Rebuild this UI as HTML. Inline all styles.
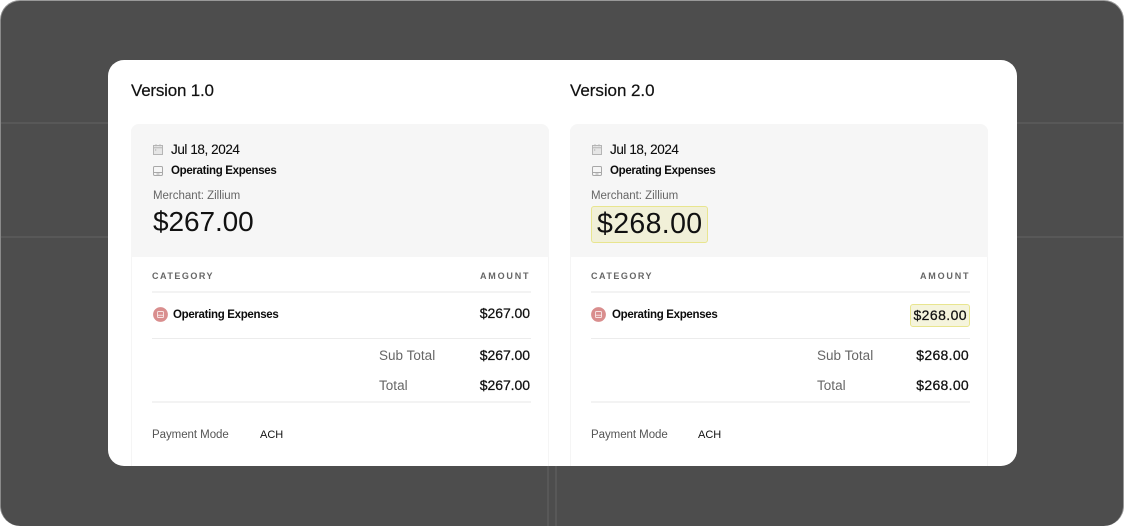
<!DOCTYPE html>
<html><head><meta charset="utf-8">
<style>
*{box-sizing:border-box}
html,body{margin:0;padding:0;width:1124px;height:526px;overflow:hidden;background:#fff}
body{position:relative;font-family:"Liberation Sans",sans-serif;color:#0c0c0c}
.a{position:absolute}
.t{position:absolute;white-space:nowrap;line-height:20px;height:20px}
.bg{left:0;top:0;width:1124px;height:526px;background:#4d4d4d;border-radius:20px;border:1px solid #999;border-bottom:0;border-left-color:#8a8a8a}
.ln{background:#585858}
.modal{left:108px;top:60px;width:909px;height:406px;background:#fff;border-radius:16px;overflow:hidden}
.h{font-size:17px;letter-spacing:-.21px;color:#111;-webkit-text-stroke:.2px #111}
.card{top:64px;width:418px;height:360px;background:#fff;border:1px solid #f5f5f5;border-radius:8px 8px 0 0;border-top:0}
.head{top:64px;width:418px;height:133px;background:#f6f6f6;border-radius:8px 8px 0 0}
.date{font-size:13.5px;letter-spacing:-.42px;-webkit-text-stroke:.1px #0c0c0c}
.b{font-size:11.5px;font-weight:bold;letter-spacing:-.32px}
.m{font-size:11.5px;color:#666;letter-spacing:-.02px}
.big{font-size:28px;letter-spacing:-.08px;line-height:32px;height:32px;color:#111}
.lab{font-size:9px;font-weight:bold;color:#666;letter-spacing:1.5px}
.lab.r{letter-spacing:1.8px}
.hr{height:1px;background:#ececec;width:379px}
.hr2{height:2px;background:#f3f3f3;width:379px}
.amt{font-size:14px;letter-spacing:-.05px;color:#111;text-align:right;width:70px;-webkit-text-stroke:.25px #111}
.gr{font-size:13.5px;color:#666;letter-spacing:.02px}
.pm{font-size:11.5px;color:#555;letter-spacing:-.05px}
.ach{font-size:11px;color:#111}
.hl{background:#f1f0d8;border:1px solid #e8e58f;border-radius:3px}
svg{position:absolute;display:block}
</style></head>
<body>
<div class="a bg"></div>
<div class="a ln" style="left:1px;top:122px;width:1122px;height:2px"></div>
<div class="a ln" style="left:1px;top:236px;width:1122px;height:2px"></div>
<div class="a ln" style="left:547px;top:466px;width:2px;height:60px"></div>
<div class="a ln" style="left:555px;top:466px;width:2px;height:60px"></div>

<div class="a modal">
  <div class="t h" style="left:23px;top:21px">Version 1.0</div>
  <div class="t h" style="left:462px;top:21px;letter-spacing:-.05px">Version 2.0</div>

  <div class="a card" style="left:23px"></div>
  <div class="a card" style="left:462px;width:418px"></div>
  <div class="a head" style="left:23px"></div>
  <div class="a head" style="left:462px"></div>

  <!-- left -->
  <svg style="left:45px;top:84px" width="10" height="11" viewBox="0 0 10 11" fill="none" stroke="#b5b5b5" stroke-width="1"><rect x=".5" y="1.5" width="9" height="9" fill="#e6e6e6"/><path d="M.5 3.8h9M3 .3v2M7 .3v2"/><path d="M2.2 6h1" stroke="#999"/></svg>
  <div class="t date" style="left:63px;top:80px">Jul 18, 2024</div>
  <svg style="left:45px;top:106px" width="10" height="10" viewBox="0 0 10 10" fill="none" stroke="#a8a8a8" stroke-width="1"><rect x=".5" y=".5" width="9" height="9" rx="1.2"/><path d="M.5 6.5h9M3.5 8h3"/></svg>
  <div class="t b" style="left:63px;top:101px">Operating Expenses</div>
  <div class="t m" style="left:45px;top:126px">Merchant: Zillium</div>
  <div class="t big" style="left:45px;top:146px">$267.00</div>

  <div class="t lab" style="left:44px;top:206px">CATEGORY</div>
  <div class="t lab r" style="left:372px;top:206px">AMOUNT</div>
  <div class="a hr2" style="left:44px;top:231px"></div>
  <svg style="left:45px;top:247px" width="15" height="15" viewBox="0 0 16 16" fill="none"><circle cx="8" cy="8" r="7.9" fill="#d98e8e"/><rect x="4.8" y="4.8" width="6.4" height="6.4" rx="1" stroke="#fff" stroke-opacity=".75"/><path d="M4.8 8.8h6.4" stroke="#fff" stroke-opacity=".75"/></svg>
  <div class="t b" style="left:65px;top:245px">Operating Expenses</div>
  <div class="t amt" style="left:352px;top:243px">$267.00</div>
  <div class="a hr" style="left:44px;top:278px"></div>
  <div class="t gr" style="left:271px;top:286px">Sub Total</div>
  <div class="t amt" style="left:352px;top:285px">$267.00</div>
  <div class="t gr" style="left:271px;top:316px">Total</div>
  <div class="t amt" style="left:352px;top:315px">$267.00</div>
  <div class="a hr2" style="left:44px;top:341px"></div>
  <div class="t pm" style="left:44px;top:365px">Payment Mode</div>
  <div class="t ach" style="left:152px;top:365px">ACH</div>

  <!-- right -->
  <svg style="left:484px;top:84px" width="10" height="11" viewBox="0 0 10 11" fill="none" stroke="#b5b5b5" stroke-width="1"><rect x=".5" y="1.5" width="9" height="9" fill="#e6e6e6"/><path d="M.5 3.8h9M3 .3v2M7 .3v2"/><path d="M2.2 6h1" stroke="#999"/></svg>
  <div class="t date" style="left:502px;top:80px">Jul 18, 2024</div>
  <svg style="left:484px;top:106px" width="10" height="10" viewBox="0 0 10 10" fill="none" stroke="#a8a8a8" stroke-width="1"><rect x=".5" y=".5" width="9" height="9" rx="1.2"/><path d="M.5 6.5h9M3.5 8h3"/></svg>
  <div class="t b" style="left:502px;top:101px">Operating Expenses</div>
  <div class="t m" style="left:483px;top:126px">Merchant: Zillium</div>
  <div class="a hl" style="left:483px;top:146px;width:117px;height:37px"></div>
  <div class="t big" style="left:489px;top:148px;font-size:28.5px;letter-spacing:.35px">$268.00</div>

  <div class="t lab" style="left:483px;top:206px">CATEGORY</div>
  <div class="t lab r" style="left:812px;top:206px">AMOUNT</div>
  <div class="a hr2" style="left:483px;top:231px"></div>
  <svg style="left:483px;top:247px" width="15" height="15" viewBox="0 0 16 16" fill="none"><circle cx="8" cy="8" r="7.9" fill="#d98e8e"/><rect x="4.8" y="4.8" width="6.4" height="6.4" rx="1" stroke="#fff" stroke-opacity=".75"/><path d="M4.8 8.8h6.4" stroke="#fff" stroke-opacity=".75"/></svg>
  <div class="t b" style="left:504px;top:245px">Operating Expenses</div>
  <div class="a hl" style="left:802px;top:244px;width:60px;height:23px;background:#f5f4dc"></div>
  <div class="t amt" style="left:789px;top:245px;letter-spacing:.42px">$268.00</div>
  <div class="a hr" style="left:483px;top:278px"></div>
  <div class="t gr" style="left:709px;top:286px">Sub Total</div>
  <div class="t amt" style="left:791px;top:285px;letter-spacing:.3px">$268.00</div>
  <div class="t gr" style="left:709px;top:316px">Total</div>
  <div class="t amt" style="left:791px;top:315px;letter-spacing:.3px">$268.00</div>
  <div class="a hr2" style="left:483px;top:341px"></div>
  <div class="t pm" style="left:483px;top:365px">Payment Mode</div>
  <div class="t ach" style="left:590px;top:365px">ACH</div>
</div>
</body></html>
